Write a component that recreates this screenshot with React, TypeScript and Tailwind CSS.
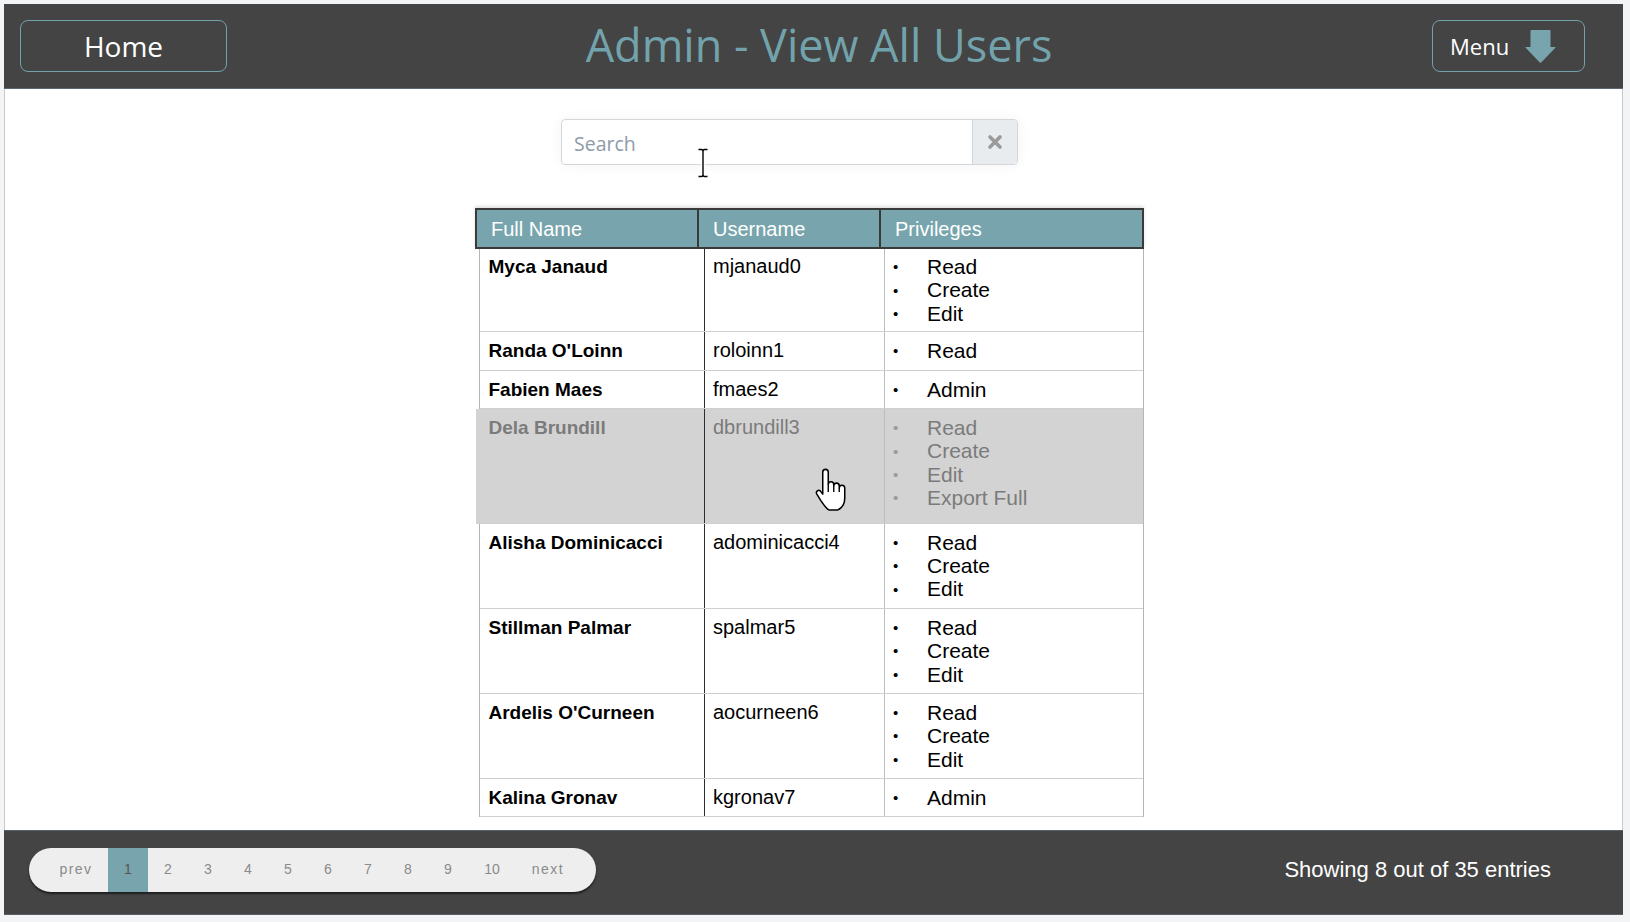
import React from "react";

type Row = {
  name: string;
  user: string;
  privs: string[];
  hover?: boolean;
  first?: boolean;
};

const rows: Row[] = [
  { name: "Myca Janaud", user: "mjanaud0", privs: ["Read", "Create", "Edit"], first: true },
  { name: "Randa O'Loinn", user: "roloinn1", privs: ["Read"] },
  { name: "Fabien Maes", user: "fmaes2", privs: ["Admin"] },
  { name: "Dela Brundill", user: "dbrundill3", privs: ["Read", "Create", "Edit", "Export Full"], hover: true },
  { name: "Alisha Dominicacci", user: "adominicacci4", privs: ["Read", "Create", "Edit"] },
  { name: "Stillman Palmar", user: "spalmar5", privs: ["Read", "Create", "Edit"] },
  { name: "Ardelis O'Curneen", user: "aocurneen6", privs: ["Read", "Create", "Edit"] },
  { name: "Kalina Gronav", user: "kgronav7", privs: ["Admin"] },
];

const pages = ["2", "3", "4", "5", "6", "7", "8", "9", "10"];

function ArrowDown() {
  return (
    <svg width="31" height="33" viewBox="0 0 31 33">
      <path
        d="M5.5 1 Q5.5 0 6.5 0 H24.5 Q25.5 0 25.5 1 V17 H30 Q31 17 30.3 17.8 L16.2 32.4 Q15.5 33.1 14.8 32.4 L0.7 17.8 Q0 17 1 17 H5.5 Z"
        fill="#78a5ad"
      />
    </svg>
  );
}

function ClearIcon() {
  return (
    <svg width="16" height="16" viewBox="0 0 16 16">
      <path d="M3 3 L13 13 M13 3 L3 13" stroke="#9a9a9a" strokeWidth="3.6" strokeLinecap="round" />
    </svg>
  );
}

function IBeam() {
  return (
    <svg width="14" height="30" viewBox="0 0 14 30">
      <path
        d="M2.5 1.5 H5.5 Q7 1.5 7 3.5 V26.5 Q7 28.5 5.5 28.5 H2.5 M11.5 1.5 H8.5 Q7 1.5 7 3.5 M7 26.5 Q7 28.5 8.5 28.5 H11.5 M4.5 15 H9.5"
        stroke="#ffffff"
        strokeWidth="3"
        fill="none"
      />
      <path
        d="M2.5 1.5 H5.5 Q7 1.5 7 3.5 V26.5 Q7 28.5 5.5 28.5 H2.5 M11.5 1.5 H8.5 Q7 1.5 7 3.5 M7 26.5 Q7 28.5 8.5 28.5 H11.5"
        stroke="#000000"
        strokeWidth="1.4"
        fill="none"
      />
    </svg>
  );
}

function HandCursor() {
  return (
    <svg width="34" height="44" viewBox="0 0 24 32">
      <path
        d="M6 3 a2 2 0 0 1 4 0 V12 a2 2 0 0 1 4 0 V13 a2 2 0 0 1 4 0 V14.5 a2 2 0 0 1 4 0 V22 c0 4 -2 7 -5 8.5 H10.5 c-2 -1 -4 -4 -6 -7 L1.6 18.8 a1.7 1.7 0 0 1 2.7 -2 L6 19 Z"
        fill="#ffffff"
        stroke="#000000"
        strokeWidth="1.1"
        strokeLinejoin="round"
      />
      <path d="M10 12 V17.5 M14 13 V17.5 M18 14.5 V17.5" stroke="#000000" strokeWidth="1" />
    </svg>
  );
}

function TableRow({ r }: { r: Row }) {
  const textMain = r.hover ? "text-[#7b7b7b]" : "text-black";
  const pad = r.first ? "pt-[6px] pb-[6px]" : r.hover ? "pt-[7px] pb-[13px]" : "py-[7px]";
  return (
    <div
      className={`flex border-b border-[#cfcfcf] leading-[23.4px] ${
        r.hover ? "-ml-[4px] bg-[#d3d3d3]" : ""
      }`}
    >
      <div
        className={`${r.hover ? "w-[229px] pl-[12.5px]" : "w-[225px] pl-[8.5px]"} shrink-0 border-r border-[#2e2e2e] ${pad} text-[19px] font-bold ${textMain}`}
      >
        {r.name}
      </div>
      <div className={`w-[180px] shrink-0 border-r border-[#bdbdbd] pl-[8px] ${pad} text-[20px] ${textMain}`}>
        {r.user}
      </div>
      <div className={`flex-1 pl-[8px] ${pad} text-[21px] ${textMain}`}>
        {r.privs.map((p) => (
          <div key={p} className="flex h-[23.4px] items-center">
            <span className={`w-[34px] shrink-0 text-[15px] leading-none ${r.hover ? "text-[#9a9a9a]" : "text-black"}`}>•</span>
            <span>{p}</span>
          </div>
        ))}
      </div>
    </div>
  );
}

export default function App() {
  return (
    <div className="relative h-[922px] w-[1630px] overflow-hidden bg-[#f3f4f6] pl-[4px] pt-[4px]">
      <div className="flex h-[911px] w-[1619px] flex-col">
        {/* Header */}
        <header className="grid h-[85px] shrink-0 grid-cols-[1fr_auto_1fr] items-center border-b border-[#5b6673] bg-[#444444] px-[16px] [font-family:'Open_Sans',sans-serif]">
          <div className="flex">
            <button className="flex h-[52px] w-[207px] items-center justify-center rounded-[8px] border border-[#72a1aa] text-[28px] text-white">
              Home
            </button>
          </div>
          <h1 className="pb-[3px] pl-[11px] text-[45px] font-normal leading-none text-[#72a3ac]">Admin - View All Users</h1>
          <div className="flex justify-end pr-[22px]">
            <button className="flex h-[52px] w-[153px] items-center rounded-[8px] border border-[#72a1aa] pl-[17px] text-[22px] text-white">
              <span>Menu</span>
              <span className="ml-[16px] flex">
                <ArrowDown />
              </span>
            </button>
          </div>
        </header>

        {/* Main */}
        <main className="relative flex-1 border-x border-[#c9c9c9] bg-white pt-[30px] [font-family:'Liberation_Sans',Arial,sans-serif]">
          <div className="ml-[556px] flex h-[46px] w-[457px] rounded-[4px] border border-[#d3d6da] shadow-[0_0_14px_rgba(0,0,0,0.05)]">
            <div className="flex flex-1 items-center pl-[12px] pt-[3px] text-[19.5px] text-[#8d9aa8] [font-family:'Open_Sans',sans-serif]">
              Search
            </div>
            <div className="flex w-[45px] items-center justify-center rounded-r-[4px] border-l border-[#d3d6da] bg-[#e9ecef]">
              <ClearIcon />
            </div>
          </div>

          <div className="ml-[470px] mt-[43px] w-[669px]">
            <div className="flex h-[41px] border-2 border-[#3a3a3a] bg-[#78a5ad] text-[20px] text-white shadow-[0_-2px_3px_rgba(0,0,0,0.12)]">
              <div className="flex w-[222px] shrink-0 items-center border-r-2 border-[#3a3a3a] pl-[14px]">Full Name</div>
              <div className="flex w-[182px] shrink-0 items-center border-r-2 border-[#3a3a3a] pl-[14px]">Username</div>
              <div className="flex flex-1 items-center pl-[14px]">Privileges</div>
            </div>
            <div className="ml-[4px] border-x border-[#b5b5b5]">
              {rows.map((r) => (
                <TableRow key={r.user} r={r} />
              ))}
            </div>
          </div>

          <div className="pointer-events-none absolute left-[691px] top-[59px]">
            <IBeam />
          </div>
          <div className="pointer-events-none absolute left-[809px] top-[379px]">
            <HandCursor />
          </div>
        </main>

        {/* Footer */}
        <footer className="flex h-[85px] shrink-0 items-center justify-between border-y border-[#56606b] bg-[#444444] pb-[6px] pl-[25px] pr-[72px] [font-family:'Liberation_Sans',Arial,sans-serif]">
          <div className="flex h-[44px] items-stretch overflow-hidden rounded-full bg-[#eeeeee] pl-[15px] pr-[16px] text-[14px] text-[#8a8a8a] shadow-[0_2px_2px_rgba(0,0,0,0.55)]">
            <div className="flex w-[64px] items-center justify-center tracking-[1.5px]">prev</div>
            <div className="flex w-[40px] items-center justify-center bg-[#78a5ad] text-[#555555]">1</div>
            {pages.map((p) => (
              <div key={p} className={`flex ${p === "10" ? "w-[48px]" : "w-[40px]"} items-center justify-center`}>
                {p}
              </div>
            ))}
            <div className="flex w-[64px] items-center justify-center tracking-[1.5px]">next</div>
          </div>
          <div className="text-[22px] text-white">Showing 8 out of 35 entries</div>
        </footer>
      </div>
    </div>
  );
}
